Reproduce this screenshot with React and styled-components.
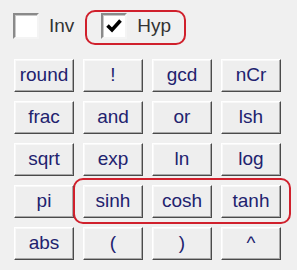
import styled, { createGlobalStyle } from "styled-components";

const GlobalStyle = createGlobalStyle`
  html, body {
    margin: 0;
    padding: 0;
    background: #f0f0f0;
  }
  body {
    font-family: "Liberation Sans", Arial, sans-serif;
  }
`;

const Panel = styled.div`
  width: 297px;
  height: 270px;
  background: #f0f0f0;
  box-sizing: border-box;
  padding: 10px 0 0 13px;
`;

const Toolbar = styled.div`
  display: flex;
  align-items: flex-start;
  height: 49px;
`;

const Option = styled.label`
  display: flex;
  align-items: center;
  gap: 10px;
  height: 26px;
  margin-top: 3px;
  font-size: 19px;
  color: #333;
`;

const Marked = styled.div`
  display: flex;
  align-items: center;
  gap: 10px;
  margin-left: 11px;
  padding: 1px 13px 4px 14px;
  border: 2px solid #d0202c;
  border-radius: 10px;
  font-size: 19px;
  color: #333;
`;

const Box = styled.span`
  display: inline-flex;
  align-items: center;
  justify-content: center;
  width: 26px;
  height: 26px;
  box-sizing: border-box;
  background: #fff;
  border-style: solid;
  border-width: 2px;
  border-color: #8a8a8a #f4f4f4 #f4f4f4 #8a8a8a;
  box-shadow: inset 1px 1px 0 #c8c8c8;
`;

const Keys = styled.div`
  display: grid;
  grid-template-columns: repeat(4, 60px);
  grid-auto-rows: 33px;
  column-gap: 9px;
  row-gap: 9px;
  margin-left: 1px;
`;

const Key = styled.button`
  grid-row: ${(p) => p.$row};
  grid-column: ${(p) => p.$col};
  margin: 0;
  padding: 0 0 2px;
  box-sizing: border-box;
  background: #eeeeee;
  border: 1px solid;
  border-color: #ffffff #4a4a4a #4a4a4a #ffffff;
  box-shadow: inset -1px -1px 0 #a8a8a8, inset 1px 1px 0 #f8f8f8;
  font-family: "Liberation Sans", Arial, sans-serif;
  font-size: 19px;
  color: #22226e;
  cursor: pointer;
`;

const Highlight = styled.div`
  grid-row: 4;
  grid-column: 2 / 5;
  margin: -7px -10px -6px -10px;
  border: 2px solid #d0202c;
  border-radius: 10px;
  pointer-events: none;
  z-index: 1;
`;

const rows = [
  ["round", "!", "gcd", "nCr"],
  ["frac", "and", "or", "lsh"],
  ["sqrt", "exp", "ln", "log"],
  ["pi", "sinh", "cosh", "tanh"],
  ["abs", "(", ")", "^"],
];

const Check = () => (
  <svg width="18" height="18" viewBox="0 0 18 18">
    <path d="M2.5 8.5 L7 13 L15.5 3.5" fill="none" stroke="#000" strokeWidth="3.6" />
  </svg>
);

export default function App() {
  return (
    <>
      <GlobalStyle />
      <Panel>
        <Toolbar>
          <Option>
            <Box />
            Inv
          </Option>
          <Marked>
            <Box>
              <Check />
            </Box>
            Hyp
          </Marked>
        </Toolbar>
        <Keys>
          {rows.map((row, r) =>
            row.map((label, c) => (
              <Key key={label} $row={r + 1} $col={c + 1}>
                {label}
              </Key>
            ))
          )}
          <Highlight />
        </Keys>
      </Panel>
    </>
  );
}
